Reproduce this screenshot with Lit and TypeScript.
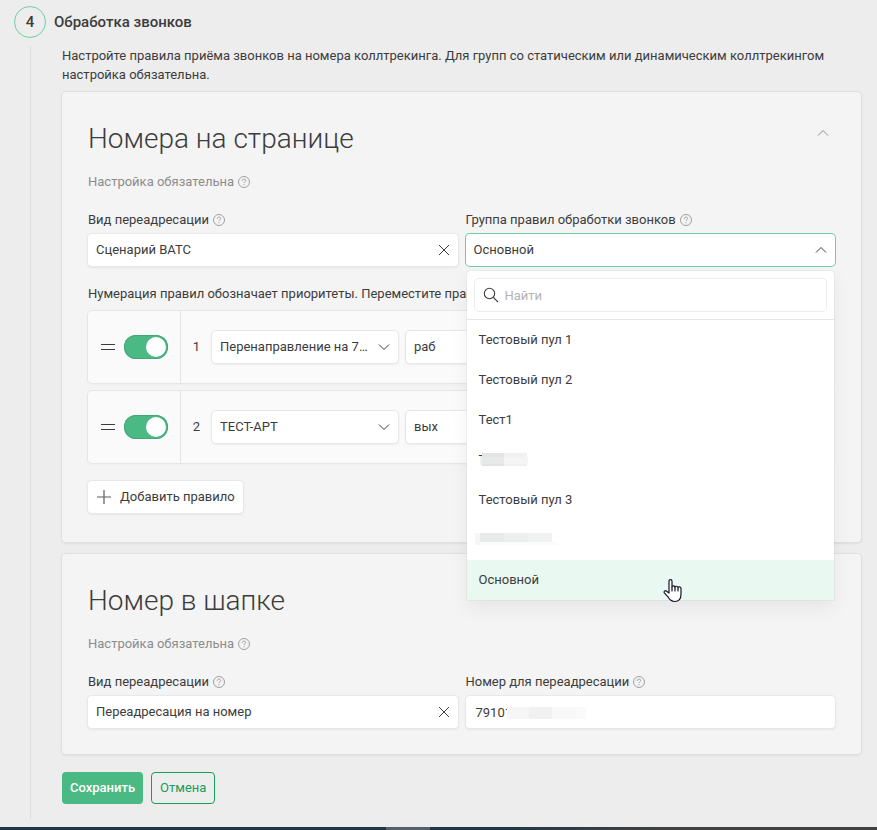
import { LitElement, html, css, svg } from "lit";
import { customElement, property, state } from "lit/decorators.js";
import { classMap } from "lit/directives/class-map.js";

const shared = css`
  * { box-sizing: border-box; }
  button, input, select { font: inherit; color: inherit; margin: 0; }
  svg { display: block; flex: none; }
  .box {
    height: 32px;
    border: 0;
    border-radius: 4px;
    background: #fff;
    box-shadow: 0 0 0 1px #e8e8e8, 0 1px 3px rgba(0, 0, 0, 0.12);
    outline: none;
  }
`;

const chevron = (up: boolean) => html`
  <svg width="12" height="12" viewBox="0 0 12 12" fill="none" stroke="currentColor">
    ${up ? svg`<path d="M1 8.5 6 3.5 11 8.5" />` : svg`<path d="M1 3.5 6 8.5 11 3.5" />`}
  </svg>
`;

@customElement("help-mark")
class HelpMark extends LitElement {
  static styles = css`
    :host { display: inline-flex; color: #a0a0a0; }
    svg { display: block; }
  `;
  render() {
    return html`<svg width="12" height="12" viewBox="0 0 12 12" fill="none" stroke="currentColor" role="img" aria-label="Справка">
      <circle cx="6" cy="6" r="5.5" />
      <path d="M4.3 4.8C4.3 3.7 5 3.1 6 3.1s1.7.6 1.7 1.5c0 1.2-1.7 1.2-1.7 2.5M6 8.1v1.1" />
    </svg>`;
  }
}

@customElement("field-select")
class FieldSelect extends LitElement {
  @property() value = "";
  @property() label = "";
  @property({ type: Boolean }) clearable = false;

  static styles = [shared, css`
    :host { display: block; position: relative; min-width: 0; }
    .box {
      appearance: none;
      display: block;
      width: 100%;
      padding: 0 28px 0 8px;
      text-overflow: ellipsis;
      white-space: nowrap;
      overflow: hidden;
    }
    .mark {
      position: absolute;
      top: 10px;
      right: 8px;
      padding: 0;
      border: 0;
      background: none;
      color: #3c3c3c;
    }
    .passive { pointer-events: none; }
  `];
  render() {
    return html`
      <select class="box" aria-label=${this.label}><option>${this.value}</option></select>
      ${this.clearable
        ? html`<button class="mark" type="button" aria-label="Очистить">
            <svg width="12" height="12" viewBox="0 0 12 12" stroke="currentColor"><path d="M1 1 11 11M11 1 1 11" /></svg>
          </button>`
        : html`<span class="mark passive">${chevron(false)}</span>`}
    `;
  }
}

const shortMask = html`<svg class="mask" width="49" height="13" viewBox="0 0 49 13" shape-rendering="crispEdges">
  <path d="M3 0h22v13H3z" fill="#e4e4e4" /><path d="M1 3h2v9H1z" fill="#eff0f0" />
  <path d="M3 4h22v7H3z" fill="#e8e9e9" /><path d="M25 0h23v13H25z" fill="#f0f0f0" /><path d="M25 4h24v7H25z" fill="#f4f4f4" />
</svg>`;
const longMask = html`<svg class="mask long" width="83" height="12" viewBox="0 0 83 12" shape-rendering="crispEdges">
  <path d="M0 0h5v12H0z" fill="#f5f6f6" /><path d="M5 0h24v9H5z" fill="#e8eaea" /><path d="M29 0h24v9H29z" fill="#eeeeee" />
  <path d="M53 0h24v9H53z" fill="#f1f1f1" /><path d="M5 9h78v3H5z" fill="#f8fcfb" />
</svg>`;

@customElement("group-picker")
class GroupPicker extends LitElement {
  @state() private open = true;
  @state() private current = 6;

  private items = [
    { text: "Тестовый пул 1" },
    { text: "Тестовый пул 2" },
    { text: "Тест1" },
    { text: "Т", mask: shortMask },
    { text: "Тестовый пул 3" },
    { text: "", mask: longMask },
    { text: "Основной" },
  ];

  static styles = [shared, css`
    :host { display: block; position: relative; }
    .toggle {
      display: flex;
      align-items: center;
      justify-content: space-between;
      width: 100%;
      padding: 0 8px;
      text-align: left;
    }
    .open { box-shadow: 0 0 0 1px #6fcfa3; }
    .menu {
      position: absolute;
      z-index: 2;
      top: 37px;
      left: 1px;
      right: 1px;
      border-radius: 4px 4px 0 0;
      background: #fff;
      box-shadow: 0 0 0 1px rgba(0, 0, 0, 0.03), 0 8px 20px rgba(0, 0, 0, 0.06);
    }
    .search {
      display: flex;
      align-items: center;
      gap: 6px;
      margin: 8px;
      padding: 0 8px;
      box-shadow: 0 0 0 1px #ebebeb;
    }
    .query { flex: 1; min-width: 0; padding: 1px 0 0; border: 0; outline: 0; background: none; }
    .query::placeholder { color: #b4b4b4; opacity: 1; }
    .list { margin: 0; padding: 0; list-style: none; border-top: 1px solid #e6e6e6; }
    .item {
      display: block;
      position: relative;
      width: 100%;
      height: 40px;
      padding: 0 12px;
      border: 0;
      background: none;
      text-align: left;
    }
    .selected { background: #e9f8f1; }
    .mask { position: absolute; left: 12px; top: 13px; }
    .long { left: 8px; }
    .hand { position: absolute; left: 196px; bottom: -4px; pointer-events: none; }
  `];

  render() {
    return html`
      <button class=${classMap({ box: true, toggle: true, open: this.open })} type="button" aria-label="Группа правил обработки звонков"
        aria-expanded=${this.open} @click=${() => (this.open = !this.open)}>
        <span>Основной</span>${chevron(this.open)}
      </button>
      ${this.open ? html`<div class="menu">
        <label class="box search">
          <svg width="16" height="16" viewBox="0 0 16 16" fill="none" stroke="#3c3c3c" stroke-width="1.1">
            <circle cx="6.5" cy="6.5" r="5.2" /><path d="M10.3 10.3 15 15" />
          </svg>
          <input class="query" type="search" placeholder="Найти" aria-label="Найти" />
        </label>
        <ul class="list">
          ${this.items.map((item, i) => html`<li>
            <button type="button" class=${classMap({ item: true, selected: i === this.current })} @click=${() => (this.current = i)}>
              ${item.text}${item.mask}
            </button>
          </li>`)}
        </ul>
        <svg class="hand" width="20" height="26" viewBox="0 0 20 26" fill="#fff" stroke="#14142a" stroke-width="1.2" stroke-linejoin="round" stroke-linecap="round">
          <path d="M6 15V3.2C6 1.2 9 1.2 9 3.2V9c0-1.6 3-1.6 3 .3 0-1.5 3-1.4 3 .5 0-1.4 3-1.2 3 .8v5.5c0 5-2 7.400-6.300 7.400-3.700 0-5.200-1.700-6.700-4.700L1.300 14.800c-.8-1.800 1.200-2.700 2.300-1.500z" />
          <path d="M9 9v4M12 9.500v3.500M15 10v3" fill="none" />
        </svg>
      </div>` : null}
    `;
  }
}

@customElement("app-root")
class AppRoot extends LitElement {
  private rules = [
    { name: "Перенаправление на 79101", schedule: "раб" },
    { name: "ТЕСТ-АРТ", schedule: "вых" },
  ];

  static styles = [shared, css`
    :host {
      display: flex;
      flex-direction: column;
      min-height: 100vh;
      background: #ededed;
      color: #3c3c3c;
      font: 13px/20px Roboto, sans-serif;
    }
    .page { flex: 1; display: flex; flex-direction: column; padding: 6px 16px 8px 14px; }
    .step { display: flex; align-items: center; gap: 8px; }
    .number {
      display: grid;
      place-items: center;
      width: 32px;
      height: 32px;
      border: 1px solid #6fcfa3;
      border-radius: 50%;
      font-size: 15px;
      font-weight: 500;
    }
    .heading { margin: 0; font-size: 15px; font-weight: 500; }
    .body {
      flex: 1;
      margin: 8px 0 0 16px;
      padding-left: 31px;
      border-left: 1px solid #dcdcdc;
    }
    .intro { margin: 0 0 8px; line-height: 19px; }
    .card {
      margin-bottom: 12px;
      padding: 26px;
      border-radius: 4px;
      background: #f4f4f4;
      box-shadow: 0 0 0 1px #e0e0e0, 0 1px 3px rgba(0, 0, 0, 0.12);
    }
    .head { display: flex; align-items: flex-start; justify-content: space-between; padding-right: 6px; }
    .title { margin: 0; font-size: 28px; line-height: 42px; font-weight: 300; }
    .fold { margin-top: 9px; padding: 0; border: 0; background: none; color: #8c8c8c; }
    .caption { display: flex; align-items: center; gap: 4px; }
    .note { margin: 12px 0 18px; color: #8c8c8c; }
    .fields { display: grid; grid-template-columns: 1fr 1fr; gap: 8px; }
    .field { display: grid; gap: 4px; min-width: 0; }
    .hint { margin: 18px 0 7px; white-space: nowrap; overflow: hidden; }
    .rules { display: grid; gap: 8px; padding-right: 2px; }
    .rule {
      display: flex;
      align-items: center;
      height: 72px;
      border-radius: 4px;
      background: #fafafa;
      box-shadow: 0 0 0 1px #e6e6e6, 0 1px 2px rgba(0, 0, 0, 0.08);
    }
    .grip {
      display: flex;
      align-items: center;
      gap: 8px;
      align-self: stretch;
      width: 93px;
      padding-left: 12px;
      border-right: 1px solid #e2e2e2;
    }
    .switch {
      appearance: none;
      display: flex;
      align-items: center;
      justify-content: flex-end;
      width: 44px;
      height: 24px;
      padding: 0 2px;
      border-radius: 12px;
      background: #4ab983;
      box-shadow: inset 0 0 0 1px #42a676;
    }
    .switch::before { content: ""; width: 20px; height: 20px; border-radius: 50%; background: #fff; }
    .order { width: 31px; text-align: center; }
    .target { width: 186px; margin-right: 8px; }
    .schedule { flex: 1; margin-right: 8px; }
    .add { display: flex; align-items: center; gap: 8px; margin: 18px 0 3px; padding: 0 8px; }
    .phone { position: relative; display: grid; }
    .input { width: 100%; padding: 0 10px; }
    .blur { position: absolute; left: 41px; top: 11px; }
    .actions { display: flex; gap: 8px; margin-top: 18px; }
    .action { height: 32px; padding: 0 8px; border-radius: 4px; }
    .save { border: 0; background: #4ab983; color: #fff; font-weight: 500; }
    .cancel { border: 1px solid #1a9c5b; background: none; color: #1a9c5b; }
    .strip {
      height: 3px;
      background:
        linear-gradient(#55626a, #55626a) 386px 0 / 44px 3px no-repeat,
        linear-gradient(90deg, #223846 0%, #223846 58%, #414141 75%);
    }
  `];

  private header(title: string, foldable: boolean) {
    return html`
      <div class="head">
        <h2 class="title">${title}</h2>
        ${foldable ? html`<button class="fold" type="button" aria-label="Свернуть">${chevron(true)}</button>` : null}
      </div>
      <div class="caption note">Настройка обязательна <help-mark></help-mark></div>
    `;
  }

  private caption(text: string) {
    return html`<span class="caption">${text} <help-mark></help-mark></span>`;
  }

  render() {
    return html`
      <main class="page">
        <div class="step"><span class="number">4</span><h1 class="heading">Обработка звонков</h1></div>
        <div class="body">
          <p class="intro">Настройте правила приёма звонков на номера коллтрекинга. Для групп со статическим или динамическим коллтрекингом настройка обязательна.</p>

          <section class="card">
            ${this.header("Номера на странице", true)}
            <div class="fields">
              <div class="field">
                ${this.caption("Вид переадресации")}
                <field-select label="Вид переадресации" value="Сценарий ВАТС" clearable></field-select>
              </div>
              <div class="field">
                ${this.caption("Группа правил обработки звонков")}
                <group-picker></group-picker>
              </div>
            </div>
            <p class="hint">Нумерация правил обозначает приоритеты. Переместите правила</p>
            <div class="rules">
              ${this.rules.map((rule, i) => html`<div class="rule">
                <div class="grip">
                  <svg width="16" height="8" viewBox="0 0 16 8" stroke="#3c3c3c"><path d="M1 1.5h14M1 6.500h14" /></svg>
                  <input class="switch" type="checkbox" role="switch" checked aria-label="Правило включено" />
                </div>
                <span class="order">${i + 1}</span>
                <field-select class="target" label="Правило" value=${rule.name}></field-select>
                <field-select class="schedule" label="Расписание" value=${rule.schedule}></field-select>
              </div>`)}
            </div>
            <button class="box add" type="button">
              <svg width="16" height="16" viewBox="0 0 16 16" stroke="#5c5c5c" stroke-width="1.2"><path d="M8 1v14M1 8h14" /></svg>
              Добавить правило
            </button>
          </section>

          <section class="card">
            ${this.header("Номер в шапке", false)}
            <div class="fields">
              <div class="field">
                ${this.caption("Вид переадресации")}
                <field-select label="Вид переадресации" value="Переадресация на номер" clearable></field-select>
              </div>
              <label class="field">
                ${this.caption("Номер для переадресации")}
                <span class="phone">
                  <input class="box input" type="tel" value="79101" />
                  <svg class="blur" width="79" height="12" viewBox="0 0 79 12" shape-rendering="crispEdges">
                    <path d="M0 0h22v12H0z" fill="#f6f6f6" /><path d="M22 0h23v12H22z" fill="#f1f1f1" />
                    <path d="M45 0h24v12H45z" fill="#f8f8f8" /><path d="M69 0h10v12H69z" fill="#fafafa" />
                  </svg>
                </span>
              </label>
            </div>
          </section>

          <div class="actions">
            <button class="action save" type="button">Сохранить</button>
            <button class="action cancel" type="button">Отмена</button>
          </div>
        </div>
      </main>
      <footer class="strip"></footer>
    `;
  }
}
